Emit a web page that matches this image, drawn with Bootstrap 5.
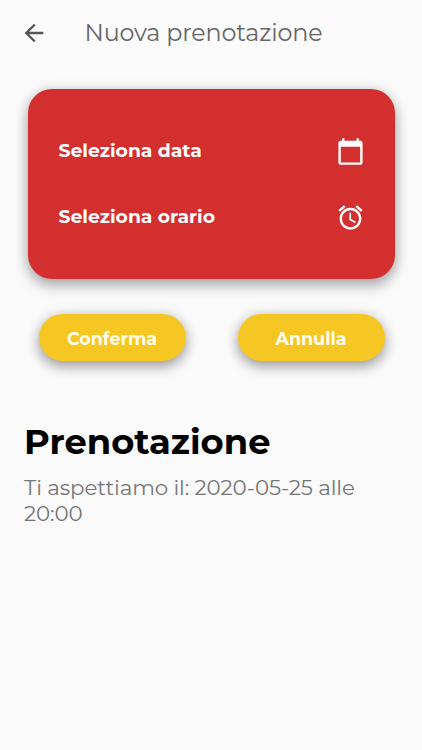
<!DOCTYPE html>
<html lang="it">
<head>
<meta charset="utf-8">
<meta name="viewport" content="width=device-width, initial-scale=1">
<title>Nuova prenotazione</title>
<link href="https://cdn.jsdelivr.net/npm/bootstrap@5.3.0/dist/css/bootstrap.min.css" rel="stylesheet">
<style>
  body { background: #fafafa; font-family: Montserrat, Inter, sans-serif; min-height: 750px; overflow: hidden; }
  .app-bar { height: 66px; padding: 0 19.5px; background: #fbfbfb; }
  .app-title { font-size: 23.8px; font-weight: 400; color: #666; margin-left: 37px; line-height: 30px; letter-spacing: -.14px; }
  .picker { margin: 23px 27px 0 28px; height: 190px; border-radius: 24px; background: #d32f2f; padding: 29px 30px 29px 30.5px; box-shadow: 0 7px 14px rgba(0,0,0,.27), 0 1px 14px rgba(0,0,0,.14); }
  .picker-row { height: 66px; font-size: 18.8px; font-weight: 700; }
  .actions { margin: 35px 37.5px 0 38.5px; }
  .action { width: 147px; height: 47px; background: #f6c723; color: #fffdec; font-size: 17.5px; font-weight: 700; box-shadow: 0 6px 13px rgba(0,0,0,.3), 0 1px 14px rgba(0,0,0,.14); }
  .action.btn { padding: 3px 0 0; }
  .summary { margin: 59px 24px 0; }
  .summary-title { font-size: 35.3px; font-weight: 700; color: #000; line-height: 44px; margin: 0 0 10px; }
  .summary-text { font-size: 21.4px; font-weight: 400; color: #757575; line-height: 26px; letter-spacing: -.13px; }
</style>
</head>
<body>
<header class="app-bar d-flex align-items-center">
  <svg width="28" height="28" viewBox="0 0 24 24" fill="#555" aria-hidden="true"><path d="M20 11H7.83l5.59-5.59L12 4l-8 8 8 8 1.41-1.41L7.83 13H20v-2z"/></svg>
  <h1 class="app-title mb-0 text-nowrap">Nuova prenotazione</h1>
</header>
<main>
  <section class="picker text-white">
    <div class="picker-row d-flex align-items-center justify-content-between">
      <span>Seleziona data</span>
      <svg width="29" height="29" viewBox="0 0 24 24" fill="#fff" aria-hidden="true"><path d="M20 3h-1V1h-2v2H7V1H5v2H4c-1.1 0-2 .9-2 2v16c0 1.1.9 2 2 2h16c1.1 0 2-.9 2-2V5c0-1.1-.9-2-2-2zm0 18H4V8h16v13z"/></svg>
    </div>
    <div class="picker-row d-flex align-items-center justify-content-between">
      <span>Seleziona orario</span>
      <svg width="29" height="29" viewBox="0 0 24 24" fill="#fff" aria-hidden="true"><path d="M22 5.72l-4.6-3.86-1.29 1.53 4.6 3.86L22 5.72zM7.88 3.39L6.6 1.86 2 5.71l1.29 1.53 4.59-3.85zM12.5 8H11v6l4.75 2.85.75-1.23-4-2.37V8zM12 4c-4.97 0-9 4.03-9 9s4.02 9 9 9c4.97 0 9-4.03 9-9s-4.03-9-9-9zm0 16c-3.87 0-7-3.13-7-7s3.13-7 7-7 7 3.13 7 7-3.13 7-7 7z"/></svg>
    </div>
  </section>
  <div class="actions d-flex justify-content-between">
    <button type="button" class="action btn rounded-pill border-0">Conferma</button>
    <button type="button" class="action btn rounded-pill border-0">Annulla</button>
  </div>
  <section class="summary">
    <h2 class="summary-title text-nowrap">Prenotazione</h2>
    <p class="summary-text mb-0">Ti aspettiamo il: 2020-05-25 alle<br>20:00</p>
  </section>
</main>
<script src="https://cdn.jsdelivr.net/npm/bootstrap@5.3.0/dist/js/bootstrap.bundle.min.js"></script>
</body>
</html>
